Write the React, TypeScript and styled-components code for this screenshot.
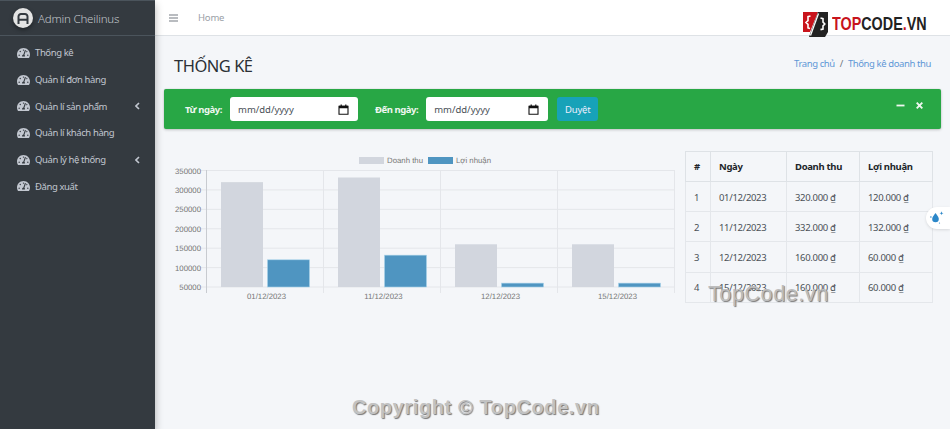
import React from "react";
import styled, { createGlobalStyle } from "styled-components";
import { FaTachometerAlt } from "react-icons/fa";

const Global = createGlobalStyle`
  html, body { margin: 0; padding: 0; width: 950px; height: 429px; overflow: hidden; background: #f4f6f9; }
  body { font-family: "Noto Sans", "Open Sans", sans-serif; font-size: 11px; color: #212529; }
  * { box-sizing: border-box; }
`;
const Page = styled.div`display: flex; width: 950px; height: 429px; position: relative; overflow: hidden;`;
const Sidebar = styled.aside`
  width: 155px; flex: none; height: 100%; background: #343a40; color: #c2c7d0;
  box-shadow: 0 4px 8px rgba(0,0,0,.3); z-index: 2; border-top: 1px solid #4b545c;
`;
const Brand = styled.div`
  height: 35px; display: flex; align-items: center; gap: 5px; padding-left: 13px;
  border-bottom: 1px solid #4b545c; font-size: 11.5px; font-weight: 300; color: #c0c4c9; letter-spacing: -.2px;
`;
const Avatar = styled.div`
  width: 20px; height: 20px; border-radius: 50%; background: #e4e4e4; display: flex; align-items: center; justify-content: center;
  box-shadow: 0 2px 4px rgba(0,0,0,.4);
`;
const Nav = styled.nav`display: flex; flex-direction: column; padding-top: 3.5px;`;
const NavItem = styled.div`
  height: 26.7px; display: flex; align-items: center; padding: 0 15.5px 0 17px; gap: 5px; font-size: 9.5px; color: #c2c7d0; letter-spacing: -.4px;
`;
const NavLabel = styled.span`flex: 1;`;
const Main = styled.main`flex: 1; min-width: 0; display: flex; flex-direction: column;`;
const Topbar = styled.header`
  height: 36px; flex: none; background: #fff; border-bottom: 1px solid #dee2e6; display: flex; align-items: center; padding-left: 14px; gap: 20px; color: #8a9096;
`;
const Home = styled.span`font-size: 9.5px; color: #9aa0a6; letter-spacing: -.2px;`;
const Content = styled.div`flex: 1; padding: 0 9px; display: flex; flex-direction: column;`;
const TitleRow = styled.div`height: 53px; display: flex; align-items: center; justify-content: space-between; padding: 5px 10px 0;`;
const Title = styled.h1`margin: 0; font-size: 16.5px; font-weight: 400; color: #2b3035; letter-spacing: -.5px;`;
const Crumbs = styled.div`font-size: 9.5px; color: #6c757d; display: flex; gap: 5px; padding-bottom: 4px; letter-spacing: -.4px;`;
const Crumb = styled.span`color: #5e97d6;`;
const FilterCard = styled.div`
  height: 40px; width: 777px; background: #28a745; border-radius: 2px; display: flex; align-items: center; position: relative; flex: none;
  box-shadow: 0 0 1px rgba(0,0,0,.2), 0 1px 3px rgba(0,0,0,.2); padding-left: 21px;
`;
const FilterLabel = styled.label`font-size: 9.5px; font-weight: 700; color: #f0f7f1; letter-spacing: -.45px;`;
const DateBox = styled.div<{ $w: number }>`
  width: ${p => p.$w}px; height: 24px; background: #fff; border-radius: 3px; margin-left: 8px; margin-right: 17px; display: flex; align-items: center;
  justify-content: space-between; padding: 0 9px 0 8px; font-size: 9.5px; color: #495057; letter-spacing: -.02px;
`;
const Go = styled.button`
  height: 24px; width: 41px; border: 0; background: #17a2b8; color: #eef; border-radius: 3px; font: inherit; font-size: 9.5px; margin-left: -8px; padding: 0; letter-spacing: -.2px;
`;
const CardTools = styled.div`position: absolute; right: 17px; top: 12px; display: flex; gap: 10px; align-items: center;`;
const Row = styled.div`display: flex; margin-top: 22px; align-items: flex-start;`;
const ChartWrap = styled.div`width: 521px; flex: none; height: 160px; `;
const Chart = styled.svg`display: block;`;
const Table = styled.table`
  width: 247px; border-collapse: collapse; font-size: 9.5px; color: #4a5056; letter-spacing: -.32px; table-layout: fixed;
`;
const Th = styled.th<{ $w: number }>`
  width: ${p => p.$w}px; height: 30px; border: 1px solid #dee2e6; text-align: left; padding: 0 8px; font-weight: 700; color: #212529;
`;
const Td = styled.td`height: 30.2px; border: 1px solid #e4e7eb; padding: 1px 8px 0; white-space: nowrap;`;
const Float = styled.div`
  position: absolute; right: 0; top: 207px; width: 24px; height: 22px; background: #fff; border-radius: 11px 0 0 11px;
  display: flex; align-items: center; justify-content: center; box-shadow: 0 1px 3px rgba(0,0,0,.12); z-index: 3;
`;
const WmLogo = styled.div`position: absolute; left: 803px; top: 12px; display: flex; align-items: center; gap: 3px; z-index: 3;`;
const WmText = styled.span`font-family: "Liberation Sans", sans-serif; font-weight: 700; font-size: 17.5px; color: #222; transform: scaleX(.82); transform-origin: left;`;
const WmRed = styled.span`color: #c8141c;`;
const WmTop = styled.div`
  position: absolute; left: 708px; top: 282px; font-family: "Liberation Sans", sans-serif; font-size: 21.5px; color: #bdbdbd; z-index: 4; letter-spacing: .6px;
  text-shadow: 1px 1px 1px #777;
`;
const WmBottom = styled.div`
  position: absolute; left: 352px; top: 396px; font-family: "Liberation Sans", sans-serif; font-weight: 700; font-size: 20px; color: #c2c2c2; letter-spacing: .6px; z-index: 4;
  text-shadow: 1px 1px 1px #777;
`;
const Gauge = styled(FaTachometerAlt)`width: 13px; height: 12px; flex: none; color: #c2c7d0;`;

const Chevron = () => <svg width="5" height="8" viewBox="0 0 5 8"><path d="M4 1 1 4l3 3" fill="none" stroke="#c2c7d0" strokeWidth="1.6" /></svg>;
const CalendarIcon = () => (
  <svg width="11" height="11" viewBox="0 0 11 11"><path d="M1 2.300h9v7.900H1z" fill="none" stroke="#111" strokeWidth="1.100" /><path d="M1 1.800h9v2.500H1zM2.600.5h1.200v2H2.600zM7.200.5h1.200v2H7.200z" fill="#111" /></svg>
);

const menu: [string, boolean][] = [["Thống kê", false], ["Quản lí đơn hàng", false], ["Quản lí sản phẩm", true], ["Quản lí khách hàng", false], ["Quản lý hệ thống", true], ["Đăng xuất", false]];
const rows = [["1", "01/12/2023", "320.000 ₫", "120.000 ₫"], ["2", "11/12/2023", "332.000 ₫", "132.000 ₫"], ["3", "12/12/2023", "160.000 ₫", "60.000 ₫"], ["4", "15/12/2023", "160.000 ₫", "60.000 ₫"]];

const ox = 164, oy = 151;
const ticks = [350000, 300000, 250000, 200000, 150000, 100000, 50000];
const yOf = (v: number) => 170.5 + (350000 - v) / 300000 * 116.5 - oy;
const groups = [
  { x: 206.5, label: "01/12/2023", a: 320000, b: 120000 },
  { x: 323.5, label: "11/12/2023", a: 332000, b: 132000 },
  { x: 440.5, label: "12/12/2023", a: 160000, b: 60000 },
  { x: 557.5, label: "15/12/2023", a: 160000, b: 60000 },
];
const axisText = { fontFamily: "Liberation Sans, sans-serif", fontSize: 7.8, fill: "#777", textRendering: "geometricPrecision" as const };

export default function App() {
  return (
    <Page>
      <Global />
      <Sidebar>
        <Brand>
          <Avatar>
            <svg width="12" height="11" viewBox="0 0 12 11"><path d="M1.500 11V3.500A2.500 2.500 0 0 1 4 1h4a2.500 2.500 0 0 1 2.500 2.500V11M1.500 6.800h9" fill="none" stroke="#343a40" strokeWidth="2" /></svg>
          </Avatar>
          Admin Cheilinus
        </Brand>
        <Nav>
          {menu.map(([t, c]) => (
            <NavItem key={t}><Gauge /><NavLabel>{t}</NavLabel>{c && <Chevron />}</NavItem>
          ))}
        </Nav>
      </Sidebar>
      <Main>
        <Topbar>
          <svg width="9" height="8" viewBox="0 0 9 8"><path d="M0 1h9M0 4h9M0 7h9" stroke="#757b81" strokeWidth="1.2" /></svg>
          <Home>Home</Home>
        </Topbar>
        <Content>
          <TitleRow>
            <Title>THỐNG KÊ</Title>
            <Crumbs><Crumb>Trang chủ</Crumb><span>/</span><Crumb>Thống kê doanh thu</Crumb></Crumbs>
          </TitleRow>
          <FilterCard>
            <FilterLabel>Từ ngày:</FilterLabel>
            <DateBox $w={128}>mm/dd/yyyy<CalendarIcon /></DateBox>
            <FilterLabel>Đến ngày:</FilterLabel>
            <DateBox $w={122}>mm/dd/yyyy<CalendarIcon /></DateBox>
            <Go>Duyệt</Go>
            <CardTools>
              <svg width="9" height="9" viewBox="0 0 9 9"><path d="M.5 4.500h8" stroke="#f0f7f1" strokeWidth="1.800" /></svg>
              <svg width="9" height="9" viewBox="0 0 9 9"><path d="M1.700 1.700l5.600 5.600M7.300 1.700 1.700 7.300" stroke="#f0f7f1" strokeWidth="1.900" /></svg>
            </CardTools>
          </FilterCard>
          <Row>
            <ChartWrap>
              <Chart width="521" height="160" viewBox="0 0 521 160">
                <rect x={359 - ox} y={157 - oy} width={25} height={7} fill="#d2d6de" />
                <text x={387 - ox} y={163 - oy} {...axisText}>Doanh thu</text>
                <rect x={428 - ox} y={157 - oy} width={25} height={7} fill="#4f95c1" />
                <text x={456 - ox} y={163 - oy} {...axisText}>Lợi nhuận</text>
                {ticks.map(t => (
                  <g key={t}>
                    <line x1={201 - ox} x2={674 - ox} y1={yOf(t)} y2={yOf(t)} stroke="#e4e6ea" />
                    <text x={201 - ox} y={yOf(t) + 3} textAnchor="end" {...axisText}>{t}</text>
                  </g>
                ))}
                {[...groups.map(g => g.x), 674.5].map((x, i) => (
                  <line key={x} x1={x - ox} x2={x - ox} y1={170 - oy} y2={293 - oy} stroke={i === 0 ? "#c8cbd0" : "#e4e6ea"} />
                ))}
                {groups.map(g => (
                  <g key={g.label}>
                    <rect x={g.x + 14.5 - ox} y={yOf(g.a)} width={42} height={yOf(50000) - yOf(g.a)} fill="#d2d6de" />
                    <rect x={g.x + 61 - ox} y={yOf(g.b)} width={42} height={yOf(50000) - yOf(g.b)} fill="#4f95c1" stroke="#a9d3ea" strokeWidth=".6" />
                    <text x={g.x + 60 - ox} y={299 - oy} textAnchor="middle" {...axisText}>{g.label}</text>
                  </g>
                ))}
              </Chart>
            </ChartWrap>
            <Table>
              <thead>
                <tr><Th $w={25}>#</Th><Th $w={76}>Ngày</Th><Th $w={73}>Doanh thu</Th><Th $w={73}>Lợi nhuận</Th></tr>
              </thead>
              <tbody>
                {rows.map(r => <tr key={r[0]}>{r.map((c, i) => <Td key={i}>{c}</Td>)}</tr>)}
              </tbody>
            </Table>
          </Row>
        </Content>
      </Main>
      <Float>
        <svg width="16" height="14" viewBox="0 0 16 14">
          <path d="M5.500 2c2.200 2.800 3.300 4.300 3.300 5.900a3.300 3.300 0 0 1-6.600 0c0-1.600 1.100-3.100 3.300-5.900z" fill="#2b87c9" />
          <path d="M11.500 .2l.5 1.500 1.500.5-1.500.5-.5 1.500-.5-1.500-1.500-.5 1.500-.5z" fill="#2b87c9" />
          <circle cx=".9" cy="6" r=".8" fill="#2b87c9" /><circle cx="9.500" cy="12" r=".6" fill="#2b87c9" />
        </svg>
      </Float>
      <WmLogo>
        <svg width="26" height="25" viewBox="0 0 26 25">
          <path d="M0 0h15L7 20H0z" fill="#c8141c" />
          <path d="M15 0h10v20l-3 5H6z" fill="#222" />
          <path d="M15.500 1.500 7.500 23.500" stroke="#fff" strokeWidth="1.300" />
          <path d="M7.500 4 5 4.600v4L3 10.500l2 1.900v3.500l2 .6M17.500 6l2.500.6v3.500l1.800 1.900-1.800 1.900V17l-2.500.6" fill="none" stroke="#fff" strokeWidth="1.600" />
        </svg>
        <WmText><WmRed>TOP</WmRed>CODE<WmRed>.</WmRed>VN</WmText>
      </WmLogo>
      <WmTop>TopCode.vn</WmTop>
      <WmBottom>Copyright © TopCode.vn</WmBottom>
    </Page>
  );
}
